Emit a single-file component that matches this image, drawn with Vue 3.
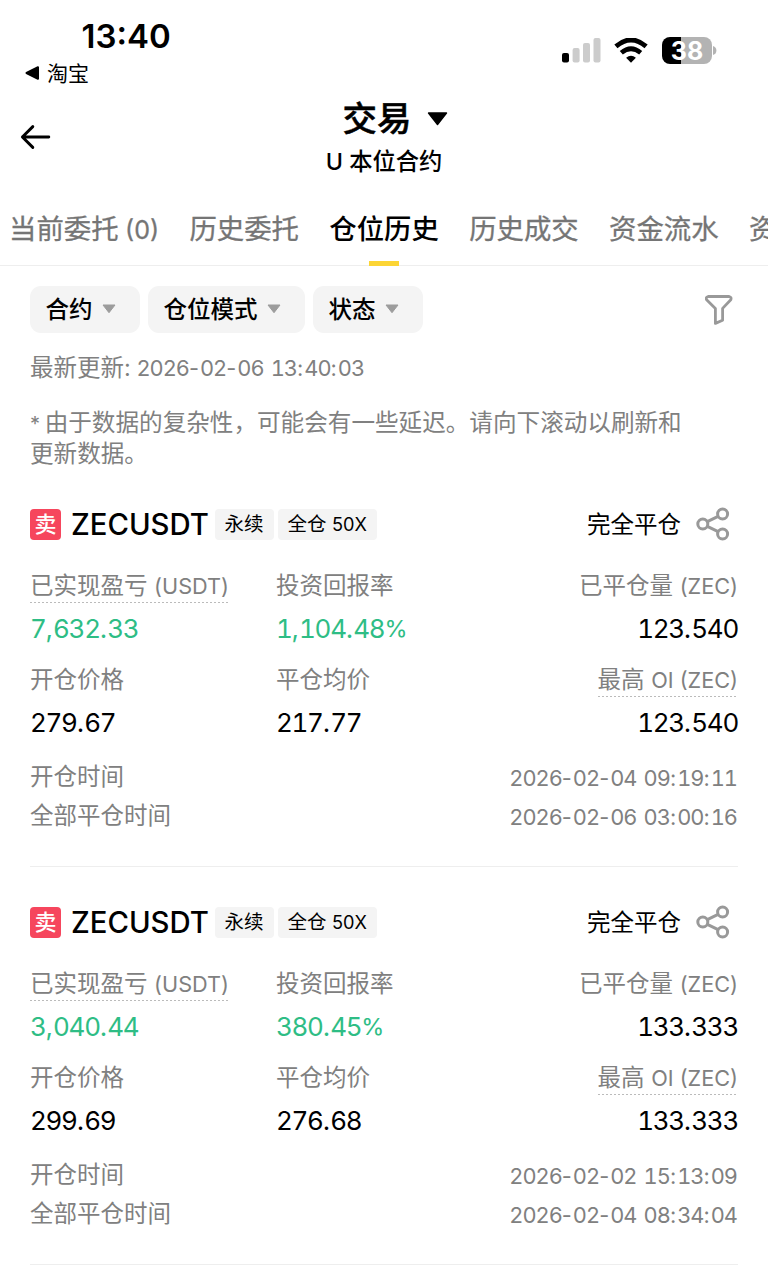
<template>
  <div class="screen">
    <div class="status-bar">
      <div class="status-left">
        <div class="time">13:40</div>
        <div class="back-app">
          <svg width="15" height="16" viewBox="0 0 15 16">
            <path d="M1.5 8 L13 2.2 V13.8 Z" fill="#000" stroke="#000" stroke-width="2" stroke-linejoin="round" />
          </svg>
          <span>淘宝</span>
        </div>
      </div>
      <div class="status-right">
        <svg width="39" height="25" viewBox="0 0 39 25">
          <rect x="0" y="15" width="7" height="9.5" rx="2" fill="#000" />
          <rect x="10.6" y="10" width="7" height="14.5" rx="2" fill="#ccc" />
          <rect x="21" y="5" width="7" height="19.5" rx="2" fill="#ccc" />
          <rect x="31.5" y="0" width="7" height="24.5" rx="2" fill="#ccc" />
        </svg>
        <svg class="wifi" width="34" height="25" viewBox="0 0 34 25">
          <path d="M1.9 8.4 Q17 -4.6 32.1 8.4" fill="none" stroke="#000" stroke-width="4.8" />
          <path d="M7.3 14.8 Q17 6.6 26.7 14.8" fill="none" stroke="#000" stroke-width="4.7" />
          <path d="M17 24.8 L12.1 19.8 Q17 15.6 21.9 19.8 Z" fill="#000" />
        </svg>
        <div class="battery">
          <span>38</span>
        </div>
        <svg class="battery-cap" width="4" height="9" viewBox="0 0 4 9">
          <path d="M0 0 Q3.4 1 3.4 4.5 Q3.4 8 0 9 Z" fill="#b3b3b3" />
        </svg>
      </div>
    </div>

    <header class="header">
      <svg class="back" width="32" height="26" viewBox="0 0 32 26">
        <path d="M28.8 13 H2.5 M12.8 2.6 L2.4 13 L12.8 23.4" fill="none" stroke="#000" stroke-width="2.9" stroke-linecap="round" stroke-linejoin="round" />
      </svg>
      <div class="titles">
        <div class="title">
          <span>交易</span>
          <svg width="21" height="14" viewBox="0 0 21 14">
            <path d="M1.5 1 H19.5 L10.5 12.5 Z" fill="#000" stroke="#000" stroke-width="1.4" stroke-linejoin="round" />
          </svg>
        </div>
        <div class="subtitle">U 本位合约</div>
      </div>
    </header>

    <nav class="tabs">
      <div v-for="tab in tabs" :key="tab.name" class="tab" :class="{ active: tab.name === activeTab }">
        {{ tab.name }}<span v-if="tab.count" class="count">({{ tab.count }})</span>
      </div>
    </nav>

    <div class="filters">
      <div v-for="filter in filters" :key="filter" class="chip">
        <span>{{ filter }}</span>
        <svg width="14" height="10" viewBox="0 0 14 10">
          <path d="M1 1 H13 L7 8.7 Z" fill="#9c9c9c" stroke="#9c9c9c" stroke-width="1" stroke-linejoin="round" />
        </svg>
      </div>
      <svg class="funnel" width="28" height="30" viewBox="0 0 28 30">
        <path d="M3.1 1.5 H24.2 Q26.8 2.2 25.8 4.8 L17.6 13.4 V25.3 L10.4 28.4 V13.4 L1.6 4.8 Q0.5 2.2 3.1 1.5 Z" fill="none" stroke="#999" stroke-width="2.8" stroke-linejoin="round" />
      </svg>
    </div>

    <div class="updated">
      最新更新:
      <span class="date"><span v-for="(part, i) in splitDigits(updatedAt)" :key="i" :class="part.type">{{ part.text }}</span></span>
    </div>
    <p class="note"><span class="star">*</span> 由于数据的复杂性，可能会有一些延迟。请向下滚动以刷新和<br>更新数据。</p>

    <section v-for="position in positions" :key="position.openedAt" class="position">
      <div class="position-head">
        <span class="side">卖</span>
        <span class="symbol">ZECUSDT</span>
        <span class="tag">永续</span>
        <span class="tag">全仓 <span class="leverage">50X</span></span>
        <span class="state">完全平仓</span>
        <svg class="share" width="34" height="34" viewBox="0 0 34 34">
          <g fill="none" stroke="#999" stroke-width="3">
            <circle cx="6.8" cy="17" r="5" />
            <circle cx="26.6" cy="7" r="5" />
            <circle cx="26.6" cy="27" r="5" />
            <path d="M11.3 14.7 L22.1 9.3 M11.3 19.3 L22.1 24.7" />
          </g>
        </svg>
      </div>

      <div class="stats">
        <div v-for="stat in position.stats" :key="stat.label" class="stat" :class="{ right: stat.right }">
          <div class="label" :class="{ dotted: stat.dotted }">
            {{ stat.label }}
            <span v-if="stat.unit" class="latin">{{ stat.unit }}</span>
          </div>
          <div class="value" :class="{ profit: stat.profit }">
            <span v-for="(part, i) in splitDigits(stat.value)" :key="i" :class="part.type">{{ part.text }}</span>
          </div>
        </div>
      </div>

      <div class="time-row">
        <span>开仓时间</span>
        <span class="date"><span v-for="(part, i) in splitDigits(position.openedAt)" :key="i" :class="part.type">{{ part.text }}</span></span>
      </div>
      <div class="time-row">
        <span>全部平仓时间</span>
        <span class="date"><span v-for="(part, i) in splitDigits(position.closedAt)" :key="i" :class="part.type">{{ part.text }}</span></span>
      </div>
    </section>
  </div>
</template>

<script setup>
const tabs = [
  { name: '当前委托', count: '0' },
  { name: '历史委托' },
  { name: '仓位历史' },
  { name: '历史成交' },
  { name: '资金流水' },
  { name: '资金费用' },
];
const activeTab = '仓位历史';

const filters = ['合约', '仓位模式', '状态'];
const updatedAt = '2026-02-06 13:40:03';

const buildStats = (pnl, roi, closed, entryPrice, closePrice, maxOi) => [
  { label: '已实现盈亏', unit: '(USDT)', value: pnl, dotted: true, profit: true },
  { label: '投资回报率', value: roi, profit: true },
  { label: '已平仓量', unit: '(ZEC)', value: closed, right: true },
  { label: '开仓价格', value: entryPrice },
  { label: '平仓均价', value: closePrice },
  { label: '最高', unit: 'OI (ZEC)', value: maxOi, dotted: true, right: true },
];

const positions = [
  {
    stats: buildStats('7,632.33', '1,104.48%', '123.540', '279.67', '217.77', '123.540'),
    openedAt: '2026-02-04 09:19:11',
    closedAt: '2026-02-06 03:00:16',
  },
  {
    stats: buildStats('3,040.44', '380.45%', '133.333', '299.69', '276.68', '133.333'),
    openedAt: '2026-02-02 15:13:09',
    closedAt: '2026-02-04 08:34:04',
  },
];

const partType = (part) => {
  if (part === '%') return 'percent';
  return /\d/.test(part) ? 'digits' : 'mark';
};

// digits are tabular, separators keep their own width
const splitDigits = (text) =>
  text.match(/\d+|\D+/g).map((part) => ({ text: part, type: partType(part) }));
</script>

<style>
body {
  margin: 0;
  background: #fff;
}
</style>

<style scoped>
.screen {
  width: 768px;
  height: 1275px;
  overflow: hidden;
  box-sizing: border-box;
  background: #fff;
  color: #000;
  font-family: Inter, "Noto Sans CJK SC", sans-serif;
  font-size: 23.5px;
  white-space: nowrap;
}

.status-bar {
  display: flex;
  justify-content: space-between;
  height: 95px;
}

.status-left {
  padding: 16px 0 0 25px;
}

.time {
  margin-left: 56.5px;
  font-size: 33px;
  line-height: 40px;
  font-weight: 600;
}

.back-app {
  display: flex;
  align-items: center;
  gap: 7px;
  height: 34px;
  font-size: 21px;
}

.back-app span {
  padding-bottom: 2px;
}

.status-right {
  display: flex;
  align-items: center;
  height: 27px;
  padding: 37px 51px 0 0;
}

.wifi {
  margin: 0 14px 0 13.5px;
}

.battery {
  width: 50px;
  height: 27px;
  border-radius: 8px;
  background: linear-gradient(90deg, #000 39%, #b3b3b3 39%);
  color: #fff;
  font-size: 25px;
  line-height: 28px;
  font-weight: 700;
  text-align: center;
}

.battery-cap {
  margin-left: 1px;
}

.header {
  display: grid;
  grid-template-columns: 1fr auto 1fr;
  height: 98px;
}

.back {
  margin: 29px 0 0 20px;
}

.titles {
  text-align: center;
}

.title {
  display: flex;
  align-items: center;
  justify-content: center;
  gap: 15px;
  height: 42px;
  padding-left: 22px;
  font-size: 34.5px;
  font-weight: 500;
  -webkit-text-stroke: 0.5px #000;
}

.title svg {
  margin-top: 5px;
}

.subtitle {
  line-height: 50px;
  font-size: 23.3px;
  font-weight: 500;
}

.tabs {
  display: flex;
  gap: 30.3px;
  height: 72px;
  padding-left: 9px;
  border-bottom: 1px solid #eee;
  color: #757575;
  font-size: 27.4px;
  line-height: 72px;
  -webkit-text-stroke: 0.3px #757575;
}

.tab {
  position: relative;
  flex: none;
}

.count {
  margin-left: 6.5px;
  font-size: 25px;
}

.tab.active {
  color: #000;
  font-weight: 500;
  -webkit-text-stroke: 0;
}

.tab.active::after {
  content: "";
  position: absolute;
  left: 50%;
  bottom: -1px;
  width: 30px;
  height: 5px;
  margin-left: -15px;
  background: #fcd535;
}

.filters {
  display: flex;
  align-items: center;
  gap: 8.5px;
  padding: 20px 35px 0 30px;
}

.chip {
  display: flex;
  align-items: center;
  gap: 9px;
  height: 46.5px;
  padding: 0 24px 0 15.5px;
  border-radius: 11px;
  background: #f4f4f4;
  font-weight: 500;
}

.chip span {
  padding-bottom: 2px;
}

.funnel {
  margin: 1px 0 0 auto;
}

.updated {
  height: 30px;
  margin: 20px 30px 0;
  color: #808080;
  line-height: 30px;
}

.updated .date {
  margin-left: -1px;
}

.note {
  margin: 25px 30px 0;
  color: #808080;
  font-size: 23.6px;
  line-height: 30px;
}

.star {
  font-size: 20px;
  letter-spacing: -2px;
}

.position {
  height: 357px;
  margin: 0 30px;
  padding-top: 40px;
  border-bottom: 1px solid #eee;
}

.position-head {
  display: flex;
  align-items: center;
  height: 32px;
}

.side {
  width: 31px;
  height: 31px;
  margin-right: 10px;
  border-radius: 4px;
  background: #f6465d;
  color: #fff;
  font-size: 22px;
  line-height: 30px;
  font-weight: 500;
  text-align: center;
}

.symbol {
  width: 143.5px;
  font-size: 29.3px;
  font-weight: 500;
}

.tag {
  height: 31px;
  margin-right: 4px;
  padding: 0 10px;
  border-radius: 4px;
  background: #f4f4f4;
  font-size: 19.5px;
  line-height: 31px;
}

.leverage {
  font-size: 18.2px;
}

.state {
  margin-left: auto;
  padding-bottom: 4px;
}

.share {
  margin: 0 8px 2px 15px;
}

.stats {
  display: grid;
  grid-template-columns: 246px 1fr auto;
  grid-auto-rows: 94.5px;
  margin-top: 30px;
}

.stat {
  display: flex;
  flex-direction: column;
  align-items: flex-start;
}

.stat.right {
  align-items: flex-end;
}

.label {
  height: 32px;
  color: #808080;
  line-height: 29.5px;
}

.label.dotted {
  background: repeating-linear-gradient(90deg, #bbb 0 2px, transparent 2px 4px) left bottom / 100% 1px no-repeat;
}

.latin {
  font-size: 21.7px;
}

.value {
  display: flex;
  margin-top: 8px;
  font-size: 26px;
  line-height: 36px;
}

.digits {
  letter-spacing: -1px;
  font-variant-numeric: tabular-nums;
}

.value .digits {
  letter-spacing: -1.3px;
}

.percent {
  font-size: 23.5px;
}

.value.profit {
  color: #2ebd85;
}

.time-row {
  display: flex;
  justify-content: space-between;
  height: 39.7px;
  color: #808080;
  line-height: 34px;
}

.date {
  font-size: 21.8px;
}

.date .mark {
  letter-spacing: 1px;
}

.time-row .date {
  margin-right: 1px;
  line-height: 36.5px;
}
</style>
